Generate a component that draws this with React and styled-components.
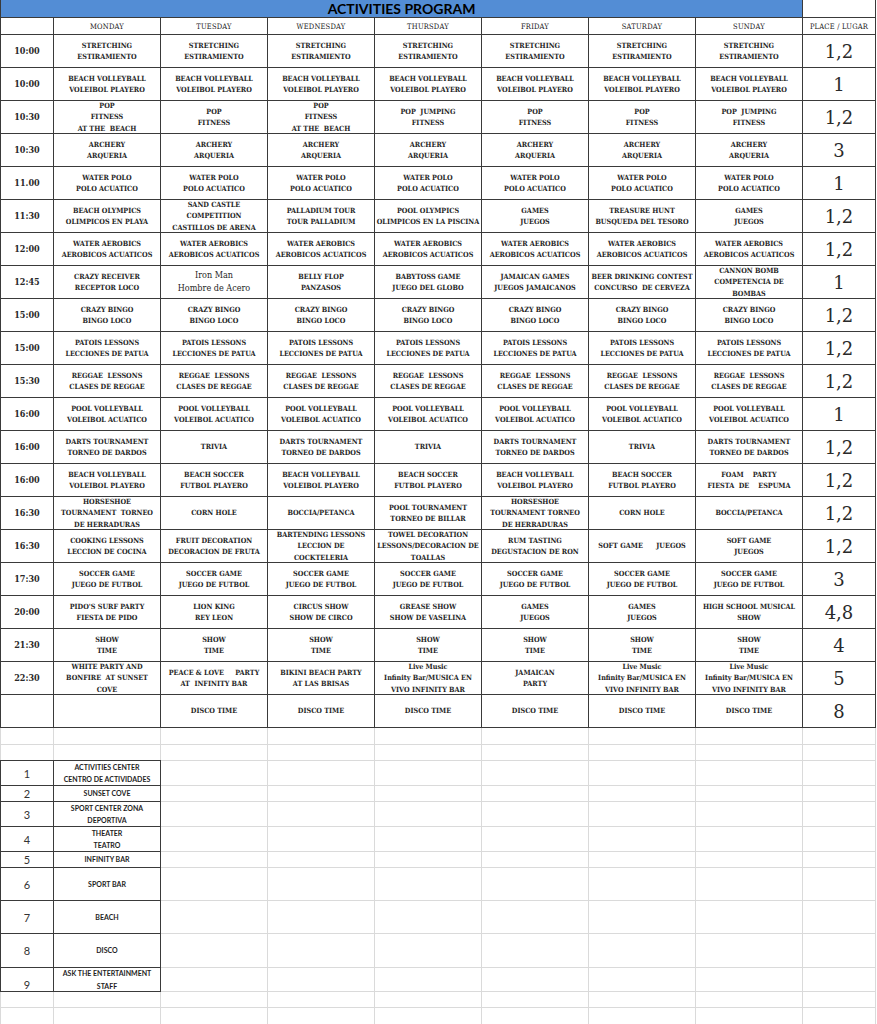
import React from 'react';
import styled, { createGlobalStyle } from 'styled-components';

const SERIF = `"DejaVu Serif Condensed", "DejaVu Serif", "Liberation Serif", serif`;
const SANS = `Lato, "Liberation Sans", sans-serif`;
const COLS = '52px repeat(7, 106px) 72px';
const LINE = '#3a3a3a';
const GRIDLINE = '#dadada';

const GlobalStyle = createGlobalStyle`
  html, body { margin: 0; padding: 0; background: #fff; }
  body { font-family: ${SERIF}; color: #2a2a2a; }
`;

const Sheet = styled.div`
  width: 877px;
  display: flex;
  flex-direction: column;
`;

const ScheduleGrid = styled.div`
  display: grid;
  width: 876px;
  box-sizing: border-box;
  grid-template-columns: ${COLS};
  grid-template-rows: 17px 16px repeat(21, 32px);
  gap: 1px;
  padding: 0 1px 1px 1px;
  background: ${LINE};
`;

const Cell = styled.div`
  background: #fff;
  display: flex;
  align-items: center;
  justify-content: center;
  text-align: center;
  overflow: hidden;
  white-space: pre;
  min-width: 0;
`;

const TitleCell = styled(Cell)`
  grid-column: 1 / span 8;
  background: #538dd5;
  font-family: ${SANS};
  font-weight: 700;
  font-size: 14px;
  color: #000;
  line-height: 17px;
`;

const HeadCell = styled(Cell)`
  font-size: 7.5px;
  font-weight: 400;
  letter-spacing: 0.2px;
  color: #222;
`;

const TimeCell = styled(Cell)`
  font-size: 9px;
  font-weight: 700;
  color: #2a2a2a;
`;

const ActivityCell = styled(Cell)`
  font-size: ${(p) => (p.$plain ? '9px' : '7.2px')};
  font-weight: ${(p) => (p.$plain ? 400 : 700)};
  line-height: ${(p) => (p.$plain ? '13px' : '11.5px')};
  color: #262626;
`;

const PlaceCell = styled(Cell)`
  font-family: "DejaVu Serif", serif;
  font-size: 18px;
  color: #2a2a2a;
`;

const LowerGrid = styled.div`
  display: grid;
  width: 876px;
  box-sizing: border-box;
  grid-template-columns: ${COLS};
  grid-template-rows: 16px 15px 24px 15px 24px 24px 15px 32px 32px 33px 23px 15px 16px;
  gap: 1px;
  padding: 0 1px 1px 1px;
  background: ${GRIDLINE};
`;

const BlankCell = styled.div`
  background: #fff;
`;

const LegendNum = styled(Cell)`
  box-shadow: 0 0 0 1px ${LINE};
  font-family: ${SANS};
  font-size: 11px;
  color: #333;
  align-items: ${(p) => (p.$bottom ? 'flex-end' : 'center')};
`;

const LegendText = styled(Cell)`
  box-shadow: 0 0 0 1px ${LINE};
  font-family: ${SANS};
  font-weight: 700;
  font-size: 7px;
  line-height: 12.5px;
  color: #1e1e1e;
`;

const same = (t) => Array(7).fill(t);
const DARTS = 'DARTS TOURNAMENT\nTORNEO DE DARDOS';
const BV = 'BEACH VOLLEYBALL\nVOLEIBOL PLAYERO';
const BS = 'BEACH SOCCER\nFUTBOL PLAYERO';
const HS = 'HORSESHOE\nTOURNAMENT  TORNEO\nDE HERRADURAS';
const LIVE = 'Live Music\nInfinity Bar/MUSICA EN\nVIVO INFINITY BAR';

const DAYS = ['MONDAY', 'TUESDAY', 'WEDNESDAY', 'THURSDAY', 'FRIDAY', 'SATURDAY', 'SUNDAY'];

const ROWS = [
  { time: '10:00', cells: same('STRETCHING\nESTIRAMIENTO'), place: '1,2' },
  { time: '10:00', cells: same(BV), place: '1' },
  {
    time: '10:30',
    cells: ['POP\nFITNESS\nAT THE  BEACH', 'POP\nFITNESS', 'POP\nFITNESS\nAT THE  BEACH', 'POP  JUMPING\nFITNESS', 'POP\nFITNESS', 'POP\nFITNESS', 'POP  JUMPING\nFITNESS'],
    place: '1,2',
  },
  { time: '10:30', cells: same('ARCHERY\nARQUERIA'), place: '3' },
  { time: '11.00', cells: same('WATER POLO\nPOLO ACUATICO'), place: '1' },
  {
    time: '11:30',
    cells: ['BEACH OLYMPICS\nOLIMPICOS EN PLAYA', 'SAND CASTLE\nCOMPETITION\nCASTILLOS DE ARENA', 'PALLADIUM TOUR\nTOUR PALLADIUM', 'POOL OLYMPICS\nOLIMPICOS EN LA PISCINA', 'GAMES\nJUEGOS', 'TREASURE HUNT\nBUSQUEDA DEL TESORO', 'GAMES\nJUEGOS'],
    place: '1,2',
  },
  { time: '12:00', cells: same('WATER AEROBICS\nAEROBICOS ACUATICOS'), place: '1,2' },
  {
    time: '12:45',
    cells: ['CRAZY RECEIVER\nRECEPTOR LOCO', 'Iron Man\nHombre de Acero', 'BELLY FLOP\nPANZASOS', 'BABYTOSS GAME\nJUEGO DEL GLOBO', 'JAMAICAN GAMES\nJUEGOS JAMAICANOS', 'BEER DRINKING CONTEST\nCONCURSO  DE CERVEZA', 'CANNON BOMB\nCOMPETENCIA DE\nBOMBAS'],
    plain: [1],
    place: '1',
  },
  { time: '15:00', cells: same('CRAZY BINGO\nBINGO LOCO'), place: '1,2' },
  { time: '15:00', cells: same('PATOIS LESSONS\nLECCIONES DE PATUA'), place: '1,2' },
  { time: '15:30', cells: same('REGGAE  LESSONS\nCLASES DE REGGAE'), place: '1,2' },
  { time: '16:00', cells: same('POOL VOLLEYBALL\nVOLEIBOL ACUATICO'), place: '1' },
  { time: '16:00', cells: [DARTS, 'TRIVIA', DARTS, 'TRIVIA', DARTS, 'TRIVIA', DARTS], place: '1,2' },
  { time: '16:00', cells: [BV, BS, BV, BS, BV, BS, 'FOAM    PARTY\nFIESTA  DE    ESPUMA'], place: '1,2' },
  {
    time: '16:30',
    cells: [HS, 'CORN HOLE', 'BOCCIA/PETANCA', 'POOL TOURNAMENT\nTORNEO DE BILLAR', 'HORSESHOE\nTOURNAMENT TORNEO\nDE HERRADURAS', 'CORN HOLE', 'BOCCIA/PETANCA'],
    place: '1,2',
  },
  {
    time: '16:30',
    cells: ['COOKING LESSONS\nLECCION DE COCINA', 'FRUIT DECORATION\nDECORACION DE FRUTA', 'BARTENDING LESSONS\nLECCION DE\nCOCKTELERIA', 'TOWEL DECORATION\nLESSONS/DECORACION DE\nTOALLAS', 'RUM TASTING\nDEGUSTACION DE RON', 'SOFT GAME      JUEGOS', 'SOFT GAME\nJUEGOS'],
    place: '1,2',
  },
  { time: '17:30', cells: same('SOCCER GAME\nJUEGO DE FUTBOL'), place: '3' },
  {
    time: '20:00',
    cells: ["PIDO'S SURF PARTY\nFIESTA DE PIDO", 'LION KING\nREY LEON', 'CIRCUS SHOW\nSHOW DE CIRCO', 'GREASE SHOW\nSHOW DE VASELINA', 'GAMES\nJUEGOS', 'GAMES\nJUEGOS', 'HIGH SCHOOL MUSICAL\nSHOW'],
    place: '4,8',
  },
  { time: '21:30', cells: same('SHOW\nTIME'), place: '4' },
  {
    time: '22:30',
    cells: ['WHITE PARTY AND\nBONFIRE  AT SUNSET\nCOVE', 'PEACE & LOVE     PARTY\nAT  INFINITY BAR', 'BIKINI BEACH PARTY\nAT LAS BRISAS', LIVE, 'JAMAICAN\nPARTY', LIVE, LIVE],
    place: '5',
  },
  { time: '', cells: ['', 'DISCO TIME', 'DISCO TIME', 'DISCO TIME', 'DISCO TIME', 'DISCO TIME', 'DISCO TIME'], place: '8' },
];

const LEGEND = [
  'ACTIVITIES CENTER\nCENTRO DE ACTIVIDADES',
  'SUNSET COVE',
  'SPORT CENTER ZONA\nDEPORTIVA',
  'THEATER\nTEATRO',
  'INFINITY BAR',
  'SPORT BAR',
  'BEACH',
  'DISCO',
  'ASK THE ENTERTAINMENT\nSTAFF',
];

const LOWER_ROWS = 13;
const LEGEND_START = 2;

export default function App() {
  const lower = [];
  for (let r = 0; r < LOWER_ROWS; r++) {
    const li = r - LEGEND_START;
    for (let c = 0; c < 9; c++) {
      const key = `${r}-${c}`;
      if (li >= 0 && li < LEGEND.length && c === 0) {
        lower.push(<LegendNum key={key} $bottom={li === 8}>{li + 1}</LegendNum>);
      } else if (li >= 0 && li < LEGEND.length && c === 1) {
        lower.push(<LegendText key={key}>{LEGEND[li]}</LegendText>);
      } else {
        lower.push(<BlankCell key={key} />);
      }
    }
  }

  return (
    <>
      <GlobalStyle />
      <Sheet>
        <ScheduleGrid>
          <TitleCell>ACTIVITIES PROGRAM</TitleCell>
          <Cell />
          <HeadCell />
          {DAYS.map((d) => (
            <HeadCell key={d}>{d}</HeadCell>
          ))}
          <HeadCell>PLACE / LUGAR</HeadCell>
          {ROWS.map((row, i) => (
            <React.Fragment key={i}>
              <TimeCell>{row.time}</TimeCell>
              {row.cells.map((t, j) => (
                <ActivityCell key={j} $plain={row.plain && row.plain.includes(j)}>
                  {t}
                </ActivityCell>
              ))}
              <PlaceCell>{row.place}</PlaceCell>
            </React.Fragment>
          ))}
        </ScheduleGrid>
        <LowerGrid>{lower}</LowerGrid>
      </Sheet>
    </>
  );
}
